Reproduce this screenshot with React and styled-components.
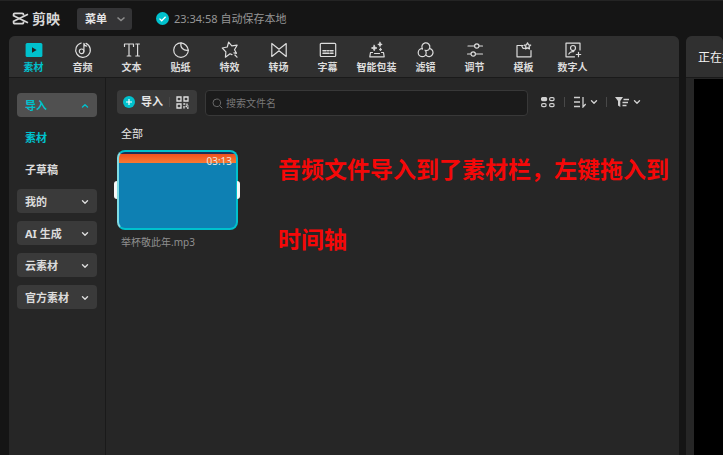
import React, { useState } from 'react';
import styled, { createGlobalStyle } from 'styled-components';

const accent = '#00c1cd';

const GlobalStyle = createGlobalStyle`
  * {
    box-sizing: border-box;
  }
  body {
    margin: 0;
    background: #151515;
    color: #e6e6e6;
    font-family: "Noto Sans", "Noto Sans CJK SC", sans-serif;
    font-size: 11px;
    line-height: 16px;
  }
  button, input {
    font: inherit;
    color: inherit;
  }
  button {
    border: 0;
    padding: 0;
    background: none;
    cursor: pointer;
  }
  svg {
    display: block;
    flex: none;
  }
`;

const Window = styled.div`
  display: flex;
  flex-direction: column;
  min-height: 100vh;
  border-top: 1px solid #242424;
`;

const TitleBar = styled.header`
  display: flex;
  align-items: center;
  height: 35px;
  padding-left: 12px;
`;

const Logo = styled.div`
  display: flex;
  align-items: center;
  gap: 3px;
  color: #d8d8d8;
  font-size: 14px;
  font-weight: 700;
`;

const MenuButton = styled.button`
  display: flex;
  align-items: center;
  justify-content: space-between;
  width: 55px;
  height: 22px;
  margin-left: 17px;
  padding: 0 6px 0 8px;
  border-radius: 3px;
  background: #343436;
  font-weight: 700;
`;

const SaveStatus = styled.div`
  display: flex;
  align-items: center;
  gap: 5px;
  margin-left: 24px;
  color: #969696;
`;

const Workspace = styled.div`
  flex: 1;
  display: grid;
  grid-template-columns: minmax(0, 1fr) 37px;
  gap: 7px;
  padding-left: 9px;
`;

const Panel = styled.section`
  display: flex;
  flex-direction: column;
  min-width: 0;
  overflow: hidden;
  border-radius: 6px 6px 0 0;
  background: #262626;
`;

const TabBar = styled.nav`
  display: flex;
  height: 42px;
  background: #303030;
  border-bottom: 1px solid #1a1a1a;
`;

const Tab = styled.button`
  display: flex;
  flex-direction: column;
  align-items: center;
  gap: 1px;
  width: 49px;
  padding-top: 5px;
  color: ${(props) => (props.$active ? accent : '#dcdcdc')};
  font-size: 10px;
  font-weight: 700;
  line-height: 14px;
  white-space: nowrap;
`;

const PanelBody = styled.div`
  flex: 1;
  display: grid;
  grid-template-columns: 97px minmax(0, 1fr);
`;

const Sidebar = styled.aside`
  display: flex;
  flex-direction: column;
  gap: 8px;
  padding: 15px 8px;
  border-right: 1px solid #1a1a1a;
`;

const SideGroup = styled.button`
  display: flex;
  align-items: center;
  justify-content: space-between;
  height: 24px;
  padding: 1px 8px 0;
  border-radius: 4px;
  background: ${(props) => (props.$active ? '#505050' : '#3a3a3a')};
  color: ${(props) => (props.$active ? accent : '#dcdcdc')};
  font-weight: 700;
`;

const SideLink = styled.button`
  height: 24px;
  padding: 2px 8px 0;
  color: ${(props) => (props.$active ? accent : '#dcdcdc')};
  font-weight: 700;
  text-align: left;
`;

const Content = styled.main`
  padding: 12px 0 0 11px;
`;

const Toolbar = styled.div`
  display: flex;
  align-items: flex-start;
  gap: 8px;
  padding-right: 38px;
`;

const ImportGroup = styled.div`
  display: flex;
  align-items: center;
  width: 80px;
  height: 24px;
  padding: 0 7px 0 6px;
  gap: 6px;
  border-radius: 4px;
  background: #3a3a3a;
`;

const ImportButton = styled.button`
  display: flex;
  align-items: center;
  gap: 6px;
  font-weight: 700;
`;

const Divider = styled.span`
  width: 1px;
  height: 10px;
  background: #484848;
`;

const SearchBox = styled.label`
  flex: 1;
  display: flex;
  align-items: center;
  gap: 3px;
  height: 26px;
  padding: 0 6px;
  border: 1px solid #383838;
  border-radius: 4px;
  background: #1b1b1b;
  color: #686868;
`;

const SearchInput = styled.input`
  flex: 1;
  min-width: 0;
  padding: 0;
  border: 0;
  outline: 0;
  background: none;
  font-size: 10px;
  &::placeholder {
    color: #787878;
    opacity: 1;
  }
`;

const Tools = styled.div`
  display: flex;
  align-items: center;
  gap: 8px;
  height: 24px;
  padding-left: 4px;
  color: #d0d0d0;
`;

const ToolButton = styled.button`
  display: flex;
  align-items: center;
  gap: 3px;
`;

const Media = styled.div`
  display: grid;
  grid-template-columns: 121px minmax(0, 1fr);
  column-gap: 40px;
  padding-top: 10px;
`;

const MediaTitle = styled.h2`
  margin: 0 0 8px;
  padding-left: 4px;
  font-size: 11px;
  font-weight: 400;
`;

const Clip = styled.figure`
  margin: 0;
`;

const Thumb = styled.div`
  position: relative;
  height: 80px;
  border: 2px solid ${accent};
  border-left-color: #7fdce4;
  border-radius: 8px;
  background: linear-gradient(#1f2f57 0 2px, #f0501e 2px, #f77a33 11px, #0e80b3 11px);
`;

const Handle = styled.span`
  position: absolute;
  top: 29px;
  ${(props) => props.$side}: ${(props) => (props.$side === 'left' ? '-5px' : '-4px')};
  width: 3px;
  height: 18px;
  border-radius: ${(props) => (props.$side === 'left' ? '3px 0 0 3px' : '0 3px 3px 0')};
  background: #f4f7f7;
`;

const Duration = styled.time`
  position: absolute;
  top: 1px;
  right: 4px;
  color: #e8e4e0;
  font-size: 10px;
`;

const ClipName = styled.figcaption`
  padding: 4px 0 0 4px;
  color: #909090;
  font-size: 10px;
`;

const Note = styled.p`
  margin: 8px 0 0;
  color: #f50808;
  font-size: 23px;
  font-weight: 700;
  line-height: 70px;
`;

const PlayerTitle = styled.div`
  height: 42px;
  padding: 14px 0 0 12px;
  overflow: hidden;
  border-bottom: 1px solid #1a1a1a;
  background: #303030;
  color: #f2f2f2;
  font-size: 12px;
  white-space: nowrap;
`;

const PlayerScreen = styled.div`
  flex: 1;
  margin: 1px 0 0 8px;
  background: #000;
`;

const Icon = ({ size = 18, children }) => (
  <svg
    width={size}
    height={size}
    viewBox={`0 0 ${size} ${size}`}
    fill="none"
    stroke="currentColor"
    strokeWidth="1.2"
    strokeLinecap="round"
    strokeLinejoin="round"
    aria-hidden="true"
  >
    {children}
  </svg>
);

const Chevron = ({ up }) => (
  <Icon size={8}>
    <path d={up ? 'M1.5 5 4 2.8 6.5 5' : 'M1.5 2.8 4 5.2 6.5 2.8'} strokeWidth="1.4" />
  </Icon>
);

const tabs = [
  {
    name: '素材',
    icon: (
      <>
        <rect x="0.6" y="2" width="16.8" height="14" rx="1.5" fill="currentColor" stroke="none" />
        <path d="M7 6.2v5.6l4.6-2.8z" fill="#222" stroke="none" />
      </>
    ),
  },
  {
    name: '音频',
    icon: (
      <>
        <path d="M7.2 2A7.3 7.3 0 1 0 12 2.4" />
        <circle cx="7.6" cy="10.3" r="2.3" />
        <path d="M9.9 10.3V2.4c.2 1.6 1.2 2.5 2.8 2.8" />
      </>
    ),
  },
  {
    name: '文本',
    icon: (
      <>
        <path d="M1.5 5.5V3h9v2.5M6 3v12M4.2 15h3.6" />
        <path d="M12.8 3h3.6M12.8 15h3.6M14.6 3v12" />
      </>
    ),
  },
  {
    name: '贴纸',
    icon: (
      <>
        <path d="M9 1.8a7.3 7.3 0 1 0 7.3 7.6C16 5.5 12.8 2.2 9 1.8z" />
        <path d="M9 1.8c-1 4.800 2.200 8 7.300 7.400" />
      </>
    ),
  },
  {
    name: '特效',
    icon: (
      <>
        <path d="M11 13.600l-2-.8-4.600 3.400.5-5.400L1.300 7l5-1L7.600 1.200l3.200 3.700 5.300-.7-2.600 4.600 2 3.500-2.600-.4" />
        <path d="M14 14l2 2.200" />
      </>
    ),
  },
  {
    name: '转场',
    icon: <path d="M1.800 2.500v13L9 9.800l7.200 5.700v-13L9 8.200z" />,
  },
  {
    name: '字幕',
    icon: (
      <>
        <rect x="1.300" y="2.300" width="15.400" height="13.200" rx="1" />
        <path d="M4 9.700h3M8.500 9.700h1M11 9.700h3M4 12.300h6M11.500 12.300h2.500" strokeWidth="1.500" />
      </>
    ),
  },
  {
    name: '智能包装',
    icon: (
      <>
        <path d="M2.500 11.500l-.7 4.300h14.400l-.7-4.300M4.500 11.500h-2M15.500 11.500h-2M6.500 12.500h5" />
        <path d="M6.200 4.200l.8 2 2 .8-2 .8-.8 2-.8-2-2-.8 2-.8zM12 1.200l.6 1.600 1.600.6-1.600.6-.6 1.600-.6-1.600-1.600-.6 1.600-.6zM12.500 7.200l.4 1 .9.3-.9.4-.4 1-.4-1-.9-.4.9-.3z" fill="currentColor" strokeWidth="0.800" />
      </>
    ),
  },
  {
    name: '滤镜',
    icon: (
      <>
        <path d="M5.500 8A4 4 0 1 1 12.800 6.500c-.4 1.900-2.200 3.200-4 3" />
        <path d="M5.300 7.700A4 4 0 1 0 9.200 12c0-1-.4-2-1.200-2.800" />
        <path d="M13 7.700a4 4 0 1 1-4 6.500" />
      </>
    ),
  },
  {
    name: '调节',
    icon: (
      <>
        <path d="M2 5h6.500M13.200 5H16.500M1.500 13h3.300M9.500 13h7" />
        <circle cx="10.800" cy="5" r="2.200" />
        <circle cx="7.200" cy="13" r="2.200" />
      </>
    ),
  },
  {
    name: '模板',
    icon: (
      <>
        <path d="M8 4.500H2v11.300h14V9.500M6.500 4.500l1.500 2.800h1.500" />
        <path d="M12.500 1.800l1 2 2.200.3-1.600 1.600.4 2.200-2-1-2 1 .4-2.200-1.600-1.600 2.200-.3z" />
      </>
    ),
  },
  {
    name: '数字人',
    icon: (
      <>
        <path d="M16 9V2.200H2v13.600h8.500" />
        <circle cx="9" cy="7" r="2.500" />
        <path d="M4.800 13c1-2 3-2.700 5-2.300M14.500 11.300v4.400M12.300 13.500h4.400" />
      </>
    ),
  },
];

const groups = ['我的', 'AI 生成', '云素材', '官方素材'];

export default function App() {
  const [activeTab, setActiveTab] = useState('素材');
  const [keyword, setKeyword] = useState('');

  return (
    <>
      <GlobalStyle />
      <Window>
        <TitleBar>
          <Logo>
            <svg width="17" height="13" viewBox="0 0 17 13" fill="none" stroke="currentColor" strokeWidth="1.800" aria-hidden="true">
              <path d="M11.500 3.400V2.500a1.200 1.200 0 0 0-1.200-1.200H2.800a1.200 1.200 0 0 0-1.200 1.200v1.200L16 10.800" />
              <path d="M11.500 9.600v.9a1.200 1.200 0 0 1-1.200 1.200H2.800a1.200 1.200 0 0 1-1.200-1.200V9.300L16 2.200" />
            </svg>
            剪映
          </Logo>
          <MenuButton aria-haspopup="menu">
            菜单
            <svg width="10" height="8" viewBox="0 0 10 8" fill="none" stroke="#8c8c8c" strokeWidth="1.600" aria-hidden="true">
              <path d="M1.500 2.500 5 5.500l3.500-3" />
            </svg>
          </MenuButton>
          <SaveStatus>
            <svg width="13" height="13" viewBox="0 0 13 13" aria-hidden="true">
              <circle cx="6.500" cy="6.500" r="6.500" fill={accent} />
              <path d="M3.500 6.600l2.200 2.200 3.900-4" fill="none" stroke="#fff" strokeWidth="1.300" />
            </svg>
            23:34:58 自动保存本地
          </SaveStatus>
        </TitleBar>

        <Workspace>
          <Panel>
            <TabBar>
              {tabs.map((tab) => (
                <Tab key={tab.name} $active={tab.name === activeTab} onClick={() => setActiveTab(tab.name)}>
                  <Icon>{tab.icon}</Icon>
                  {tab.name}
                </Tab>
              ))}
            </TabBar>

            <PanelBody>
              <Sidebar>
                <SideGroup $active>
                  导入
                  <Chevron up />
                </SideGroup>
                <SideLink $active>素材</SideLink>
                <SideLink>子草稿</SideLink>
                {groups.map((name) => (
                  <SideGroup key={name}>
                    {name}
                    <Chevron />
                  </SideGroup>
                ))}
              </Sidebar>

              <Content>
                <Toolbar>
                  <ImportGroup>
                    <ImportButton>
                      <svg width="12" height="12" viewBox="0 0 12 12" aria-hidden="true">
                        <circle cx="6" cy="6" r="6" fill={accent} />
                        <path d="M6 3v6M3 6h6" stroke="#fff" strokeWidth="1.200" />
                      </svg>
                      导入
                    </ImportButton>
                    <Divider />
                    <ToolButton aria-label="扫码导入">
                      <svg width="13" height="13" viewBox="0 0 13 13" fill="none" stroke="#e0e0e0" strokeWidth="1.300" aria-hidden="true">
                        <path d="M1 1h4v4H1zM8 1h4v4H8zM1 8h4v4H1z" />
                        <path d="M7.300 8h2M11 7.400v2M8 10v2.600M9.500 10.500h1.500M11 12h1.600M12 9.500v1" />
                      </svg>
                    </ToolButton>
                  </ImportGroup>

                  <SearchBox>
                    <Icon size={11}>
                      <circle cx="4.800" cy="4.800" r="3.800" strokeWidth="1" />
                      <path d="M7.800 7.800l2.200 2.200" strokeWidth="1" />
                    </Icon>
                    <SearchInput
                      aria-label="搜索文件名"
                      placeholder="搜索文件名"
                      value={keyword}
                      onChange={(e) => setKeyword(e.target.value)}
                    />
                  </SearchBox>

                  <Tools>
                    <ToolButton aria-label="视图">
                      <svg width="16" height="12" viewBox="0 0 16 12" fill="none" stroke="currentColor" strokeWidth="1.200" aria-hidden="true">
                        <rect x="1.600" y="1.600" width="5" height="3" rx="1" fill="currentColor" />
                        <rect x="9.600" y="1.600" width="4.500" height="3" rx="1.300" />
                        <rect x="1.600" y="7.600" width="4.500" height="3" rx="1.300" />
                        <rect x="9.600" y="7.600" width="4.500" height="3" rx="1.300" />
                      </svg>
                    </ToolButton>
                    <Divider />
                    <ToolButton aria-label="排序">
                      <svg width="14" height="12" viewBox="0 0 14 12" fill="none" stroke="currentColor" strokeWidth="1.300" aria-hidden="true">
                        <path d="M1 1.500h6M1 6h6M1 10.500h6M10 1v10l2.700-3" />
                      </svg>
                      <Chevron />
                    </ToolButton>
                    <Divider />
                    <ToolButton aria-label="筛选">
                      <svg width="15" height="12" viewBox="0 0 15 12" stroke="currentColor" strokeWidth="1.300" aria-hidden="true">
                        <path d="M0 1h8L5.300 5v6L3 9.500V5z" fill="currentColor" stroke="none" />
                        <path d="M8.500 3.500H14M7.500 6.500h5.500M7.500 9.500h4" />
                      </svg>
                      <Chevron />
                    </ToolButton>
                  </Tools>
                </Toolbar>

                <Media>
                  <div>
                    <MediaTitle>全部</MediaTitle>
                    <Clip>
                      <Thumb>
                        <Handle $side="left" />
                        <Handle $side="right" />
                        <Duration>03:13</Duration>
                      </Thumb>
                      <ClipName>举杯敬此年.mp3</ClipName>
                    </Clip>
                  </div>
                  <Note>音频文件导入到了素材栏，左键拖入到时间轴</Note>
                </Media>
              </Content>
            </PanelBody>
          </Panel>

          <Panel>
            <PlayerTitle>正在播</PlayerTitle>
            <PlayerScreen />
          </Panel>
        </Workspace>
      </Window>
    </>
  );
}
